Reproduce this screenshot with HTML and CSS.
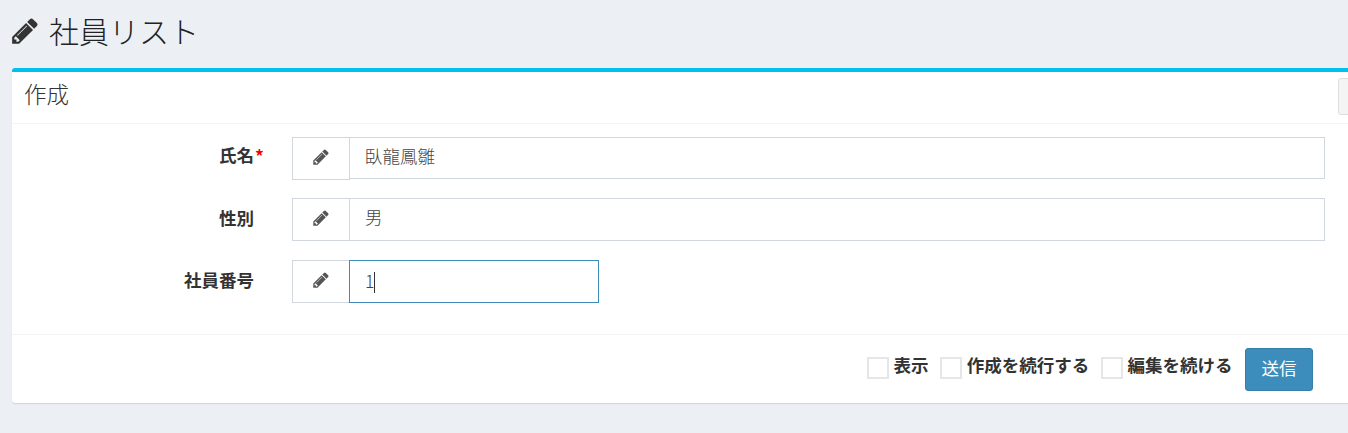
FILE: index.html
```html
<!DOCTYPE html>
<html lang="ja">
<head>
<meta charset="utf-8">
<title>社員リスト</title>
<link rel="stylesheet" href="styles.css">
</head>
<body>
<svg class="sprite" width="0" height="0"><symbol id="pencil" viewBox="0 0 1792 1792"><path d="M491 1536l91-91-235-235-91 91v107h128v128h107zm523-928q0-22-22-22-10 0-17 7l-542 542q-7 7-7 17 0 22 22 22 10 0 17-7l542-542q7-7 7-17zm-54-192l416 416-832 832h-416v-416zm683 96q0 53-37 90l-166 166-416-416 166-165q36-38 90-38 53 0 91 38l235 234q37 39 37 91z"/></symbol></svg>
<header class="page-head">
  <svg class="head-icon"><use href="#pencil"/></svg>
  <h1 class="page-title">社員リスト</h1>
</header>
<section class="box">
  <div class="box-head">
    <h3 class="box-title">作成</h3>
    <div class="box-tool"></div>
  </div>
  <form class="box-body">
    <div class="row row-first">
      <label class="label">氏名<span class="req">*</span></label>
      <div class="group">
        <span class="addon addon-tall"><svg class="icon"><use href="#pencil"/></svg></span>
        <div class="field field-short">臥龍鳳雛</div>
      </div>
    </div>
    <div class="row">
      <label class="label">性別</label>
      <div class="group">
        <span class="addon"><svg class="icon"><use href="#pencil"/></svg></span>
        <div class="field">男</div>
      </div>
    </div>
    <div class="row">
      <label class="label">社員番号</label>
      <div class="group">
        <span class="addon"><svg class="icon"><use href="#pencil"/></svg></span>
        <div class="field field-focus">1<span class="caret"></span></div>
      </div>
    </div>
  </form>
  <div class="box-foot">
    <label class="check"><span class="tick"></span><b class="check-text">表示</b></label>
    <label class="check"><span class="tick"></span><b class="check-text">作成を続行する</b></label>
    <label class="check"><span class="tick"></span><b class="check-text">編集を続ける</b></label>
    <button class="submit" type="button">送信</button>
  </div>
</section>
</body>
</html>
```

FILE: styles.css
```css
* { box-sizing: border-box; }
html, body { margin: 0; height: 100%; overflow: hidden; }
body {
  background: #ecf0f5;
  color: #333;
  font-family: "Noto Sans CJK JP", "Noto Sans", sans-serif;
  font-size: 17.5px;
  padding: 0 0 0 12px;
}
.sprite { display: block; width: 0; height: 0; }
.page-head {
  display: flex;
  align-items: center;
  height: 68px;
  margin-left: -2px;
  padding-bottom: 9px;
}
.head-icon { width: 30px; height: 30px; fill: #333; margin-top: 2px; }
.page-title {
  margin: 0 0 0 9px;
  font-size: 30px;
  font-weight: 300;
  line-height: 1;
  color: #222;
}
.box {
  width: 1360px;
  height: 335px;
  background: #fff;
  border-top: 4px solid #00c0ef;
  border-radius: 3px 0 0 3px;
  box-shadow: 0 1px 1px rgba(0, 0, 0, .12);
}
.box-head {
  display: flex;
  align-items: center;
  height: 52px;
  padding: 0 0 5px 12px;
  border-bottom: 1px solid #f4f4f4;
}
.box-title {
  margin: 0 0 4px;
  font-size: 22.5px;
  font-weight: 300;
  line-height: 1;
  color: #333;
}
.box-tool {
  align-self: flex-start;
  width: 40px;
  height: 37px;
  margin: 6px -6px 0 auto;
  background: #f4f4f4;
  border: 1px solid #ddd;
  border-radius: 3px;
}
.box-body {
  display: flex;
  flex-direction: column;
  gap: 18.5px;
  height: 211px;
  padding-top: 12.9px;
  border-bottom: 1px solid #f4f4f4;
}
.row { display: flex; align-items: flex-start; height: 43px; }
.label {
  position: relative;
  width: 242px;
  padding-top: 7px;
  text-align: right;
  font-weight: 700;
  font-size: 17.5px;
  line-height: 26px;
}
.row-first .label { padding-top: 5px; }
.req {
  position: absolute;
  left: 100%;
  top: 6px;
  margin-left: 1px;
  color: #f00;
  font-size: 17.5px;
}
.group { display: flex; margin-left: 38px; }
.addon {
  display: flex;
  align-items: center;
  justify-content: center;
  width: 58px;
  height: 43px;
  background: #fff;
  border: 1px solid #d2d6de;
}
.icon { width: 18px; height: 18px; fill: #555; margin-top: -3px; }
.field {
  width: 976px;
  height: 43px;
  margin-left: -1px;
  padding: 0 15px;
  border: 1px solid #d2d6de;
  color: #444;
  line-height: 36px;
  font-weight: 300;
}
.field-short { height: 42px; }
.field-focus {
  width: 250px;
  border-color: #3c8dbc;
  line-height: 40px;
}
.caret {
  display: inline-block;
  width: 1px;
  height: 21px;
  background: #333;
  vertical-align: -5px;
}
.box-foot {
  display: flex;
  align-items: flex-start;
  height: 68px;
  padding: 13px 0 0 855px;
}
.check { display: flex; align-items: flex-start; margin: 9px 11.8px 0 0; }
.tick {
  display: block;
  width: 22px;
  height: 22px;
  margin-right: 4.5px;
  background: #fff;
  border: 2px solid #e6e6e6;
}
.check-text {
  font-size: 17.5px;
  font-weight: 700;
  line-height: 26px;
  margin-top: -5px;
  color: #333;
}
.submit {
  width: 68px;
  height: 43px;
  margin-left: .6px;
  padding: 0 0 5px;
  background: #3c8dbc;
  color: #fff;
  font: 400 17.5px "Noto Sans CJK JP", sans-serif;
  border: 1px solid #367fa9;
  border-radius: 3px;
}
```
